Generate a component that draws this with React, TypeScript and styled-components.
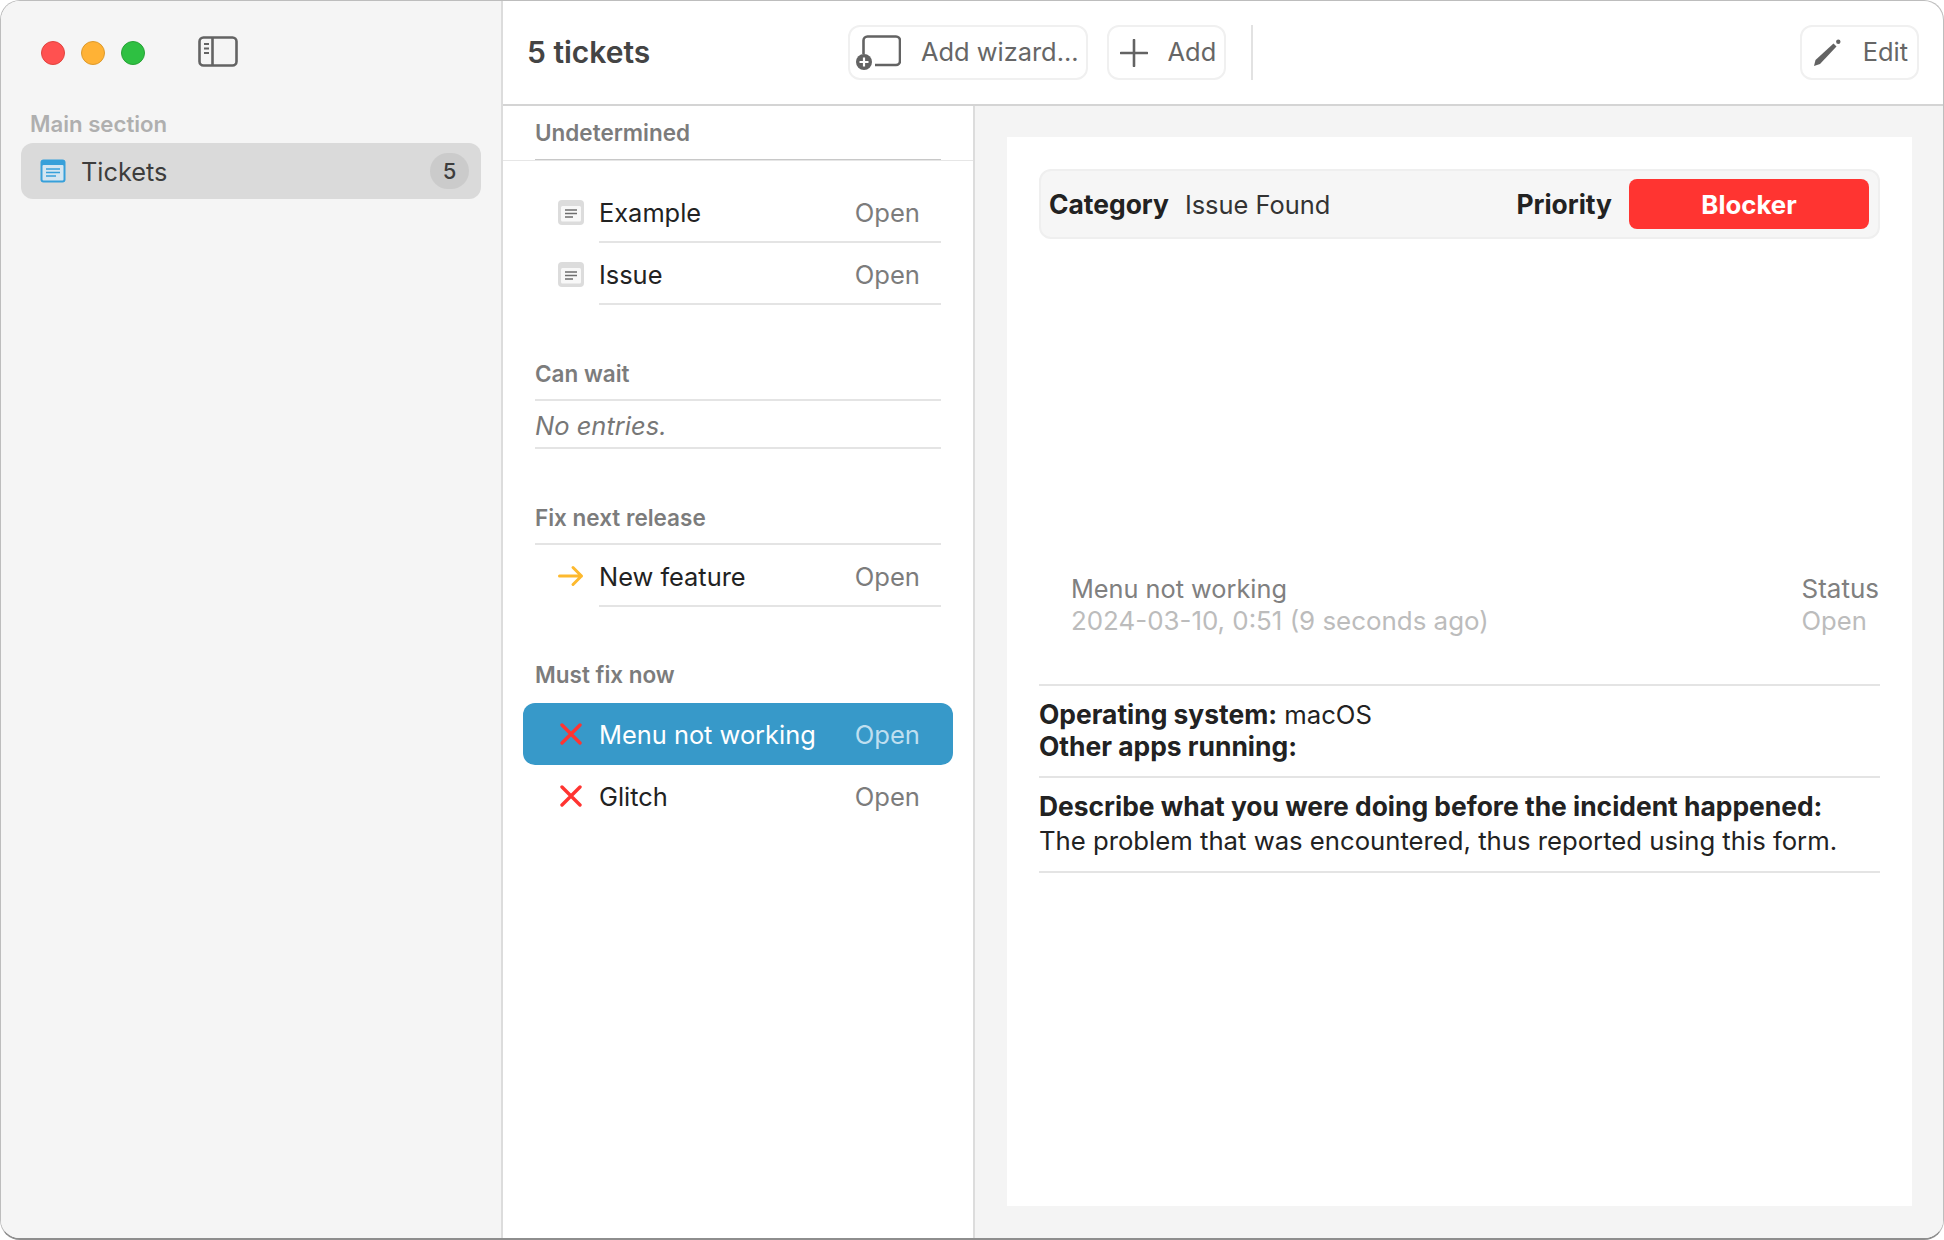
import React, { ReactElement } from 'react';
import styled, { createGlobalStyle } from 'styled-components';

const GlobalStyle = createGlobalStyle`
  html, body {
    margin: 0;
    padding: 0;
    background: #ffffff;
    overflow: hidden;
  }
  * {
    box-sizing: border-box;
  }
`;

type TicketIcon = 'note' | 'arrow' | 'cross';

interface Ticket {
  title: string;
  icon: TicketIcon;
  selected?: boolean;
  last?: boolean;
}

interface Group {
  name: string;
  tickets: Ticket[];
}

const GROUPS: Group[] = [
  {
    name: 'Can wait',
    tickets: [],
  },
  {
    name: 'Fix next release',
    tickets: [{ title: 'New feature', icon: 'arrow' }],
  },
  {
    name: 'Must fix now',
    tickets: [
      { title: 'Menu not working', icon: 'cross', selected: true },
      { title: 'Glitch', icon: 'cross', last: true },
    ],
  },
];

function NoteIcon(): ReactElement {
  return (
    <svg width="26" height="25" viewBox="0 0 26 25">
      <rect x="0" y="0" width="26" height="25" rx="4" fill="#dcdcdc" />
      <rect x="3" y="6" width="20" height="15.5" rx="1.5" fill="#f8f8f8" />
      <path d="M7 10h12M7 13.5h12M7 17h8" stroke="#6e6e6e" strokeWidth="1.5" />
    </svg>
  );
}

function ArrowIcon(): ReactElement {
  return (
    <svg width="26" height="22" viewBox="0 0 26 22">
      <path
        d="M1.5 11h22M15 2.5l8.5 8.5-8.5 8.5"
        fill="none"
        stroke="#fdb92e"
        strokeWidth="3"
        strokeLinecap="round"
        strokeLinejoin="round"
      />
    </svg>
  );
}

function CrossIcon(): ReactElement {
  return (
    <svg width="22" height="22" viewBox="0 0 22 22">
      <path
        d="M2 2l18 18M20 2L2 20"
        fill="none"
        stroke="#ff3431"
        strokeWidth="3.4"
        strokeLinecap="round"
      />
    </svg>
  );
}

function RowIcon({ icon }: { icon: TicketIcon }): ReactElement {
  if (icon === 'note') return <NoteIcon />;
  if (icon === 'arrow') return <ArrowIcon />;
  return <CrossIcon />;
}

function TicketRow({ title, icon, selected, last }: Ticket): ReactElement {
  return (
    <RowStyled selected={selected}>
      <RowIconBox>
        <RowIcon icon={icon} />
      </RowIconBox>
      <RowBody plain={selected || last}>
        <RowTitle selected={selected}>{title}</RowTitle>
        <RowStatus selected={selected}>Open</RowStatus>
      </RowBody>
    </RowStyled>
  );
}

function App(): ReactElement {
  return (
    <>
      <GlobalStyle />
      <Window>
        <Sidebar>
          <TitleBar>
            <TrafficLight color="#ff5150" edge="#e0443e" />
            <TrafficLight color="#ffb235" edge="#dd9a2c" />
            <TrafficLight color="#2ec042" edge="#27a236" />
            <SidebarToggle>
              <svg width="40" height="31" viewBox="0 0 40 31">
                <rect x="1.5" y="1.5" width="37" height="28" rx="4" fill="none" stroke="#636363" strokeWidth="2.6" />
                <path d="M14.5 1.5v28" stroke="#636363" strokeWidth="2.6" />
                <path d="M6 8h5M6 12.5h5M6 17h5" stroke="#636363" strokeWidth="2" />
              </svg>
            </SidebarToggle>
          </TitleBar>
          <SidebarHeading>Main section</SidebarHeading>
          <SidebarItem>
            <svg width="26" height="24" viewBox="0 0 26 24">
              <rect x="0.5" y="0.5" width="25" height="23" rx="3" fill="#37a0da" />
              <rect x="2.5" y="6" width="21" height="15.5" rx="1" fill="#d5e6f1" />
              <path d="M6 10h14M6 13.5h14M6 17h10" stroke="#37a0da" strokeWidth="1.6" />
            </svg>
            <SidebarLabel>Tickets</SidebarLabel>
            <Badge>5</Badge>
          </SidebarItem>
        </Sidebar>
        <Main>
          <Toolbar>
            <ToolbarTitle>5 tickets</ToolbarTitle>
            <ToolButton inset={5} trail={7}>
              <svg width="46" height="36" viewBox="0 0 46 36">
                <path
                  d="M8.5 19V5.5a4 4 0 0 1 4-4h28.5a4 4 0 0 1 4 4V26a4 4 0 0 1-4 4H20"
                  fill="none"
                  stroke="#636363"
                  strokeWidth="2.6"
                />
                <circle cx="9" cy="27" r="8" fill="#636363" />
                <path d="M9 22.5v9M4.5 27h9" stroke="#ffffff" strokeWidth="2.2" />
              </svg>
              <ToolLabel>Add wizard...</ToolLabel>
            </ToolButton>
            <ToolButton inset={11} trail={8}>
              <svg width="28" height="28" viewBox="0 0 28 28">
                <path d="M14 1v26M1 14h26" stroke="#636363" strokeWidth="2.6" strokeLinecap="round" />
              </svg>
              <ToolLabel>Add</ToolLabel>
            </ToolButton>
            <ToolDivider />
            <ToolSpacer />
            <ToolButton inset={11} trail={9}>
              <svg width="30" height="28" viewBox="0 0 30 28">
                <path d="M1 27l1.500-6L20.500 4.500l3 3L7 25z" fill="#636363" />
                <circle cx="25.300" cy="2.700" r="2.200" fill="#636363" />
              </svg>
              <ToolLabel>Edit</ToolLabel>
            </ToolButton>
          </Toolbar>
          <Panes>
            <ListPane>
              <ListHeader>
                <GroupName>Undetermined</GroupName>
              </ListHeader>
              <FirstGroup>
                <TicketRow title="Example" icon="note" />
                <TicketRow title="Issue" icon="note" />
              </FirstGroup>
              {GROUPS.map((group) => {
                const plain = group.tickets.some((t) => t.selected);
                return (
                  <GroupBox key={group.name} compact={plain}>
                    <GroupTitle plain={plain}>{group.name}</GroupTitle>
                    {group.tickets.length === 0 && <Empty>No entries.</Empty>}
                    {group.tickets.map((ticket) => (
                      <TicketRow key={ticket.title} {...ticket} />
                    ))}
                  </GroupBox>
                );
              })}
            </ListPane>
            <DetailPane>
              <Paper>
                <MetaBar>
                  <MetaKey>Category</MetaKey>
                  <MetaValue>Issue Found</MetaValue>
                  <MetaKey>Priority</MetaKey>
                  <PriorityTag>Blocker</PriorityTag>
                </MetaBar>
                <Summary>
                  <SummaryCol>
                    <SummaryTop size={25.3}>Menu not working</SummaryTop>
                    <SummarySub size={25.9}>2024-03-10, 0:51 (9 seconds ago)</SummarySub>
                  </SummaryCol>
                  <SummaryCol>
                    <SummaryTop size={26}>Status</SummaryTop>
                    <SummarySub size={25.6}>Open</SummarySub>
                  </SummaryCol>
                </Summary>
                <Block>
                  <Line>
                    <strong>Operating system:</strong> macOS
                  </Line>
                  <Line>
                    <strong>Other apps running:</strong>
                  </Line>
                </Block>
                <Block>
                  <Line>
                    <strong>Describe what you were doing before the incident happened:</strong>
                  </Line>
                  <Answer>The problem that was encountered, thus reported using this form.</Answer>
                </Block>
              </Paper>
            </DetailPane>
          </Panes>
        </Main>
      </Window>
    </>
  );
}

const Window = styled.div`
  display: flex;
  width: 1944px;
  height: 1240px;
  overflow: hidden;
  background: #ffffff;
  border: 1px solid #bdbdbd;
  border-bottom: 2px solid #8e8e8e;
  border-radius: 20px;
  font-family: Inter, 'Liberation Sans', sans-serif;
  color: #222222;
`;

const Sidebar = styled.div`
  flex: none;
  width: 502px;
  padding: 0 20px;
  background: #f5f5f5;
  border-right: 2px solid #dcdcdc;
`;

const TitleBar = styled.div`
  display: flex;
  align-items: center;
  gap: 16px;
  height: 105px;
  padding: 0 0 1px 20px;
`;

const TrafficLight = styled.span<{ color: string; edge: string }>`
  width: 24px;
  height: 24px;
  border-radius: 50%;
  background: ${({ color }) => color};
  border: 1px solid ${({ edge }) => edge};
`;

const SidebarToggle = styled.span`
  display: flex;
  margin-left: 37px;
  margin-top: -4px;
`;

const SidebarHeading = styled.div`
  margin: 4px 0 0 9px;
  height: 33px;
  font-size: 22.2px;
  line-height: 28px;
  font-weight: 600;
  color: #afafaf;
`;

const SidebarItem = styled.div`
  display: flex;
  align-items: center;
  height: 56px;
  padding: 0 12px 0 19px;
  background: #dadada;
  border-radius: 12px;
`;

const SidebarLabel = styled.span`
  flex: 1;
  margin-left: 15px;
  font-size: 25.3px;
  color: #3d3d3d;
`;

const Badge = styled.span`
  display: flex;
  align-items: center;
  justify-content: center;
  width: 39px;
  height: 36px;
  border-radius: 18px;
  background: #cbcbcb;
  font-size: 22px;
  font-weight: 500;
  color: #3d3d3d;
`;

const Main = styled.div`
  flex: 1;
  display: flex;
  flex-direction: column;
  min-width: 0;
`;

const Toolbar = styled.div`
  flex: none;
  display: flex;
  align-items: center;
  gap: 19px;
  height: 105px;
  padding: 0 24px 0 24px;
  border-bottom: 2px solid #d4d4d4;
`;

const ToolbarTitle = styled.div`
  width: 302px;
  margin-top: -2px;
  font-size: 30px;
  font-weight: 600;
  color: #444444;
`;

const ToolButton = styled.div<{ inset: number; trail: number }>`
  display: flex;
  align-items: center;
  gap: 20px;
  height: 55px;
  padding: 0 ${({ trail }) => trail}px 0 ${({ inset }) => inset}px;
  border: 2px solid #f0f0f0;
  border-radius: 12px;
`;

const ToolLabel = styled.span`
  margin-top: -2px;
  font-size: 25.4px;
  color: #666666;
  white-space: nowrap;
`;

const ToolDivider = styled.span`
  width: 2px;
  height: 55px;
  margin-left: 6px;
  background: #e2e2e2;
`;

const ToolSpacer = styled.span`
  flex: 1;
`;

const Panes = styled.div`
  flex: 1;
  display: flex;
  min-height: 0;
`;

const ListPane = styled.div`
  flex: none;
  width: 472px;
  border-right: 2px solid #dcdcdc;
`;

const ListHeader = styled.div`
  height: 55px;
  padding: 0 32px;
  border-bottom: 1px solid #e6e6e6;
`;

const GroupName = styled.div`
  height: 54px;
  font-size: 22.5px;
  line-height: 54px;
  font-weight: 600;
  color: #7c7c7c;
  border-bottom: 1px solid #c8c8c8;
`;

const FirstGroup = styled.div`
  padding: 20px 0 0;
`;

const GroupBox = styled.div<{ compact?: boolean }>`
  padding-top: ${({ compact }) => (compact ? '54px' : '55px')};
`;

const GroupTitle = styled.div<{ plain?: boolean }>`
  margin: 0 32px;
  height: ${({ plain }) => (plain ? '42px' : '41px')};
  font-size: 22.5px;
  line-height: 28px;
  font-weight: 600;
  color: #7c7c7c;
  border-bottom: ${({ plain }) => (plain ? 'none' : '2px solid #e4e4e4')};
`;

const Empty = styled.div`
  margin: 0 32px;
  height: 48px;
  font-size: 25.5px;
  line-height: 50px;
  font-style: italic;
  color: #777777;
  border-bottom: 2px solid #e4e4e4;
`;

const RowStyled = styled.div<{ selected?: boolean }>`
  display: flex;
  align-items: stretch;
  height: 62px;
  margin: 0 20px;
  padding-right: 12px;
  border-radius: 12px;
  background: ${({ selected }) => (selected ? '#3799c9' : 'transparent')};
`;

const RowIconBox = styled.span`
  flex: none;
  display: flex;
  align-items: center;
  justify-content: center;
  width: 76px;
  padding-left: 20px;
`;

const RowBody = styled.div<{ plain?: boolean }>`
  flex: 1;
  display: flex;
  align-items: center;
  justify-content: space-between;
  padding: 2px 21px 0 0;
  border-bottom: 2px solid ${({ plain }) => (plain ? 'transparent' : '#e4e4e4')};
`;

const RowTitle = styled.span<{ selected?: boolean }>`
  font-size: 25.4px;
  color: ${({ selected }) => (selected ? '#ffffff' : '#222222')};
`;

const RowStatus = styled.span<{ selected?: boolean }>`
  font-size: 25.6px;
  color: ${({ selected }) => (selected ? '#bfdff0' : '#7c7c7c')};
`;

const DetailPane = styled.div`
  flex: 1;
  padding: 31px 31px 32px 32px;
  background: #f4f4f4;
`;

const Paper = styled.div`
  height: 100%;
  padding: 32px 32px 0;
  background: #ffffff;
`;

const MetaBar = styled.div`
  display: flex;
  align-items: center;
  height: 70px;
  padding: 0 9px 0 8px;
  background: #f6f6f6;
  border: 2px solid #efefef;
  border-radius: 12px;
`;

const MetaKey = styled.span`
  font-size: 26.4px;
  font-weight: 700;
  color: #222222;
`;

const MetaValue = styled.span`
  flex: 1;
  margin-left: 16px;
  font-size: 25.4px;
  color: #333333;
`;

const PriorityTag = styled.span`
  display: flex;
  align-items: center;
  justify-content: center;
  width: 240px;
  height: 50px;
  margin-left: 17px;
  border-radius: 8px;
  background: #ff3431;
  font-size: 25.8px;
  font-weight: 700;
  color: #ffffff;
`;

const Summary = styled.div`
  display: flex;
  justify-content: space-between;
  height: 113px;
  margin-top: 334px;
  padding: 0 1px 0 32px;
  border-bottom: 2px solid #e4e4e4;
`;

const SummaryCol = styled.div`
  line-height: 32px;
`;

const SummaryTop = styled.div<{ size: number }>`
  font-size: ${({ size }) => size}px;
  color: #808080;
`;

const SummarySub = styled.div<{ size: number }>`
  font-size: ${({ size }) => size}px;
  color: #bcbcbc;
`;

const Block = styled.div`
  padding: 12px 0 14px;
  border-bottom: 2px solid #e4e4e4;
  font-size: 25.7px;
  line-height: 32px;

  strong {
    font-size: 26.4px;
  }
`;

const Line = styled.div`
  height: 32px;
  color: #222222;
`;

const Answer = styled.div`
  margin-top: 3px;
  color: #222222;
`;

export default App;
